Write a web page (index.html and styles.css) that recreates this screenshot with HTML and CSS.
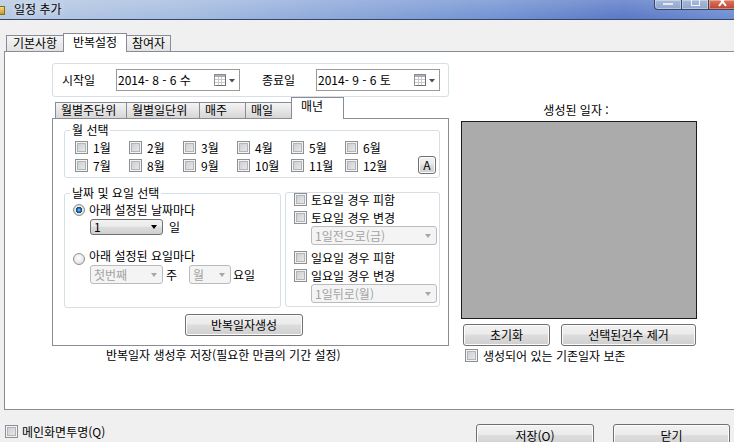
FILE: index.html
```html
<!DOCTYPE html>
<html lang="ko">
<head>
  <meta charset="UTF-8">
  <title>일정 추가</title>
  <link rel="stylesheet" href="styles.css">
</head>
<body>

  <!-- ──────────  TITLE BAR  ────────── -->
  <div class="titlebar">
    <span class="app-icon"></span>
    <span class="title">일정 추가</span>
    <div class="win-buttons">
      <span class="wb wb-min"><i class="g-min"></i></span>
      <span class="wb wb-max"><i class="g-max"></i></span>
      <span class="wb wb-close">
        <svg width="12" height="10" viewBox="0 0 12 10"><path d="M2 -3 L9 6 M9 -3 L2 6" stroke="#fff" stroke-width="2"/></svg>
      </span>
    </div>
  </div>

  <!-- ──────────  MAIN TABS  ────────── -->
  <div class="tabs">
    <span class="tab tab-basic">기본사항</span>
    <span class="tab active tab-repeat">반복설정</span>
    <span class="tab tab-people">참여자</span>
  </div>

  <div class="tab-panel">

    <!-- left side : period + rule tabs -->
    <div class="left-col">
      <div class="range-box">
        <span class="range-label">시작일</span>
        <div class="datepick">
          <span class="date-text">2014- 8 - 6 수</span>
          <svg class="cal-icon" width="21" height="12" viewBox="0 0 21 12">
            <rect x="0.5" y="0.5" width="11" height="11" fill="#fff" stroke="#8d8d8d"/>
            <rect x="1" y="1" width="10" height="2" fill="#a9b0ba"/>
            <path d="M1 5.5h10M1 8.5h10M4.5 3v8M7.5 3v8" stroke="#c9c9c9"/>
            <path d="M11.5 2v10M2 11.5h10" stroke="#6e6e6e"/>
            <path d="M15 5h6l-3 3.5z" fill="#3f4f6b"/>
          </svg>
        </div>
        <span class="range-label range-end">종료일</span>
        <div class="datepick">
          <span class="date-text">2014- 9 - 6 토</span>
          <svg class="cal-icon" width="21" height="12" viewBox="0 0 21 12">
            <rect x="0.5" y="0.5" width="11" height="11" fill="#fff" stroke="#8d8d8d"/>
            <rect x="1" y="1" width="10" height="2" fill="#a9b0ba"/>
            <path d="M1 5.5h10M1 8.5h10M4.5 3v8M7.5 3v8" stroke="#c9c9c9"/>
            <path d="M11.5 2v10M2 11.5h10" stroke="#6e6e6e"/>
            <path d="M15 5h6l-3 3.5z" fill="#3f4f6b"/>
          </svg>
        </div>
      </div>

      <div class="subtabs">
        <span class="subtab st-1">월별주단위</span>
        <span class="subtab st-2">월별일단위</span>
        <span class="subtab st-3">매주</span>
        <span class="subtab st-4">매일</span>
        <span class="subtab active st-5">매년</span>
      </div>

      <div class="sub-panel">
        <fieldset class="group months">
          <legend>월 선택</legend>
          <div class="month-row">
            <div class="month-grid">
              <label class="chk"><span class="cb"></span>1월</label>
              <label class="chk"><span class="cb"></span>2월</label>
              <label class="chk"><span class="cb"></span>3월</label>
              <label class="chk"><span class="cb"></span>4월</label>
              <label class="chk"><span class="cb"></span>5월</label>
              <label class="chk"><span class="cb"></span>6월</label>
              <label class="chk"><span class="cb"></span>7월</label>
              <label class="chk"><span class="cb"></span>8월</label>
              <label class="chk"><span class="cb"></span>9월</label>
              <label class="chk"><span class="cb"></span>10월</label>
              <label class="chk"><span class="cb"></span>11월</label>
              <label class="chk"><span class="cb"></span>12월</label>
            </div>
            <button class="btn btn-a">A</button>
          </div>
        </fieldset>

        <div class="option-row">
          <fieldset class="group day-group">
            <legend>날짜 및 요일 선택</legend>
            <div class="radio-line"><span class="rb on"></span>아래 설정된 날짜마다</div>
            <div class="combo-line line-day">
              <span class="combo combo-day">1<i class="arrow"></i></span>
              <span class="unit unit-day">일</span>
            </div>
            <div class="radio-line radio-week"><span class="rb"></span>아래 설정된 요일마다</div>
            <div class="combo-line line-week">
              <span class="combo disabled combo-nth">첫번째<i class="arrow"></i></span>
              <span class="unit unit-week">주</span>
              <span class="combo disabled combo-wd">월<i class="arrow"></i></span>
              <span class="unit unit-wd">요일</span>
            </div>
          </fieldset>

          <fieldset class="group weekend-group">
            <label class="chk chk-wk"><span class="cb"></span>토요일 경우 피함</label>
            <label class="chk chk-wk chk-change"><span class="cb"></span>토요일 경우 변경</label>
            <span class="combo disabled combo-shift">1일전으로(금)<i class="arrow"></i></span>
            <label class="chk chk-wk chk-sun"><span class="cb"></span>일요일 경우 피함</label>
            <label class="chk chk-wk chk-sun2"><span class="cb"></span>일요일 경우 변경</label>
            <span class="combo disabled combo-shift">1일뒤로(월)<i class="arrow"></i></span>
          </fieldset>
        </div>

        <button class="btn btn-gen">반복일자생성</button>
      </div>

      <p class="note">반복일자 생성후 저장(필요한 만큼의 기간 설정)</p>
    </div>

    <!-- right side : generated dates -->
    <div class="right-col">
      <div class="result-label">생성된 일자 :</div>
      <div class="result-list"></div>
      <div class="result-buttons">
        <button class="btn btn-reset">초기화</button>
        <button class="btn btn-remove">선택된건수 제거</button>
      </div>
      <label class="chk chk-keep"><span class="cb"></span>생성되어 있는 기존일자 보존</label>
    </div>
  </div>

  <!-- ──────────  FOOTER  ────────── -->
  <div class="footer">
    <label class="chk chk-main"><span class="cb"></span>메인화면투명(Q)</label>
    <button class="btn btn-save">저장(O)</button>
    <button class="btn btn-close">닫기</button>
  </div>

</body>
</html>
```

FILE: styles.css
```css
/* Page */
html, body {
  margin: 0;
  padding: 0;
}
body {
  width: 734px;
  height: 442px;
  overflow: hidden;
  background: #f0f0f0;
  font-family: "Noto Sans CJK KR", "Noto Sans", sans-serif;
  font-size: 12px;
  line-height: 14px;
  color: #000;
}

/* Title bar */
.titlebar {
  height: 19px;
  display: flex;
  align-items: flex-start;
  border-bottom: 1px solid #34466b;
  background:
    linear-gradient(to bottom, rgba(255,255,255,0.18), rgba(255,255,255,0)),
    linear-gradient(to right, #b7cae3 0%, #a5bce0 25%, #87a3d8 50%, #7192d2 68%, #5a78c6 85%, #6f8fd2 100%);
}
.app-icon {
  width: 4px;
  height: 7px;
  margin-top: 6px;
  background: linear-gradient(#f4dc7a, #c89a2c);
  border: 1px solid #8a6a22;
  border-left: none;
}
.title {
  margin-left: 9px;
  line-height: 17px;
  text-shadow: 0 0 6px rgba(255,255,255,0.9);
}
.win-buttons {
  margin-left: auto;
  margin-right: -3px;
  display: flex;
  height: 10px;
}
.wb {
  box-sizing: border-box;
  height: 10px;
  border: 1px solid #3a4866;
  border-top: none;
  display: flex;
  justify-content: center;
  background: linear-gradient(#a9bbd9, #8ea5cf);
  box-shadow: inset 0 0 0 1px rgba(255,255,255,0.35);
}
.wb-min {
  width: 28px;
  border-radius: 0 0 0 4px;
}
.wb-max {
  width: 27px;
  border-left: none;
}
.wb-close {
  width: 28px;
  border-left: none;
  background: linear-gradient(#dd7a62, #c2402a);
}
.g-min {
  width: 10px;
  height: 2px;
  margin-top: 3px;
  background: #e6e9ef;
}
.g-max {
  width: 7px;
  height: 5px;
  border: 1px solid #f2f4f8;
  border-top: none;
}

/* Main tabs */
.tabs {
  height: 31px;
  box-sizing: border-box;
  padding: 13px 0 0 6px;
  display: flex;
  align-items: flex-end;
}
.tab {
  box-sizing: border-box;
  height: 16px;
  border: 1px solid #898c95;
  border-bottom: none;
  background: linear-gradient(#f5f5f5, #e2e2e2);
  text-align: center;
  line-height: 14px;
}
.tab.active {
  height: 19px;
  margin-bottom: -1px;
  background: #fff;
  position: relative;
  z-index: 1;
  line-height: 16px;
}
.tab-basic { width: 58px; }
.tab-repeat { width: 64px; margin-left: -1px; }
.tab-people { width: 45px; margin-left: -1px; }

.tab-panel {
  box-sizing: border-box;
  width: 740px;
  height: 359px;
  margin-left: 4px;
  border: 1px solid #898c95;
  background: #fff;
  padding-left: 47px;
  display: flex;
}

/* Left column */
.left-col {
  width: 397px;
}
.range-box {
  box-sizing: border-box;
  height: 34px;
  margin-top: 11px;
  border: 1px solid #d5dfe5;
  border-radius: 3px;
  padding-left: 9px;
  display: flex;
  align-items: center;
}
.range-label {
  width: 36px;
}
.range-end {
  margin-left: 22px;
}
.datepick {
  box-sizing: border-box;
  width: 124px;
  height: 22px;
  margin-left: 18px;
  border: 1px solid #9a9a9a;
  padding: 0 4px 0 1px;
  display: flex;
  align-items: center;
  background: #fff;
}
.date-text {
  white-space: pre;
}
.cal-icon {
  margin-left: auto;
}

/* Rule tabs */
.subtabs {
  height: 21px;
  padding-left: 3px;
  display: flex;
  align-items: flex-end;
}
.subtab {
  box-sizing: border-box;
  height: 16px;
  border: 1px solid #898c95;
  border-bottom: none;
  padding-left: 5px;
  background: linear-gradient(#f4f4f4, #d6d6d6);
  line-height: 14px;
  margin-left: -1px;
}
.subtab.active {
  height: 22px;
  margin-bottom: -1px;
  background: #fff;
  padding-left: 9px;
  line-height: 15px;
  position: relative;
  z-index: 1;
}
.st-1 { width: 72px; margin-left: 0; }
.st-2 { width: 74px; }
.st-3 { width: 47px; }
.st-4 { width: 47px; }
.st-5 { width: 53px; }

.sub-panel {
  box-sizing: border-box;
  height: 228px;
  border: 1px solid #898c95;
  background: #fff;
}

/* Group boxes */
.group {
  margin: 0;
  padding: 0;
  border: 1px solid #d5dfe5;
  border-radius: 3px;
  min-width: 0;
  box-sizing: border-box;
}
.group legend {
  padding: 0 2px;
  line-height: 14px;
}

.months {
  margin: 4px 8px 0 11px;
  padding: 4px 3px 5px 10px;
}
.months legend {
  margin-left: -5px;
}
.month-row {
  display: flex;
}
.month-grid {
  display: grid;
  grid-template-columns: repeat(6, 54px);
  row-gap: 5px;
}

/* Checkbox / radio */
.chk {
  display: flex;
  align-items: center;
  gap: 5px;
  height: 13px;
  line-height: 13px;
  white-space: nowrap;
}
.cb {
  box-sizing: border-box;
  width: 13px;
  height: 13px;
  flex: none;
  border: 1px solid #8e8f8f;
  background: linear-gradient(135deg, #c6c9ce 0%, #eeeeee 100%);
  box-shadow: inset 0 0 0 1px #f4f4f4, inset 0 0 0 2px #b1b5ba;
}
.rb {
  box-sizing: border-box;
  width: 12px;
  height: 12px;
  flex: none;
  border: 1px solid #8e8f8f;
  border-radius: 50%;
  background: radial-gradient(circle at 45% 40%, #ffffff 0%, #d6d6d6 100%);
}
.rb.on {
  background: radial-gradient(circle closest-side at 50% 50%, #8fd0f7 0%, #2a7fc6 30%, #123f6e 58%, #f2f2f2 64%, #d6d6d6 100%);
}

.btn {
  box-sizing: border-box;
  height: 22px;
  padding: 0;
  border: 1px solid #707070;
  border-radius: 3px;
  background: linear-gradient(#f2f2f2 0%, #ebebeb 45%, #dddddd 50%, #cfcfcf 100%);
  box-shadow: inset 0 0 0 1px #fcfcfc;
  font: inherit;
  line-height: 14px;
  color: #000;
}
.btn-a {
  width: 18px;
  height: 18px;
  margin-left: auto;
  align-self: flex-end;
  margin-bottom: -2px;
}

/* Date / weekday options */
.option-row {
  display: flex;
  gap: 4px;
  margin: 8px 0 0 11px;
  align-items: flex-start;
}
.day-group {
  width: 217px;
  height: 122px;
  padding: 4px 0 0 8px;
}
.day-group legend {
  margin-left: -3px;
}
.radio-line {
  display: flex;
  align-items: center;
  gap: 4px;
  height: 12px;
  line-height: 12px;
}
.radio-week {
  margin-top: 15px;
  align-items: flex-start;
}
.radio-week .rb {
  margin-top: 3px;
}
.combo-line {
  display: flex;
  align-items: center;
  padding-left: 17px;
}
.line-day {
  margin-top: 3px;
}
.line-week {
  margin-top: 3px;
}
.combo {
  box-sizing: border-box;
  display: flex;
  align-items: center;
  height: 19px;
  padding-left: 3px;
  border: 1px solid #707070;
  border-radius: 3px;
  background: linear-gradient(#f2f2f2 0%, #ebebeb 45%, #dddddd 50%, #cfcfcf 100%);
  white-space: nowrap;
}
.combo.disabled {
  border-color: #b8bbbf;
  background: #f4f4f4;
  color: #a3a3a3;
}
.arrow {
  margin-left: auto;
  margin-right: 5px;
  width: 0;
  height: 0;
  border-left: 3.5px solid transparent;
  border-right: 3.5px solid transparent;
  border-top: 4px solid #000;
}
.combo.disabled .arrow {
  border-top-color: #a6a6a6;
}
.combo-day {
  width: 73px;
  height: 16px;
}
.unit-day { margin-left: 6px; }
.combo-nth { width: 73px; }
.unit-week { margin-left: 3px; }
.combo-wd { width: 42px; margin-left: 12px; }
.unit-wd { margin-left: 2px; }

.weekend-group {
  width: 155px;
  height: 115px;
  margin-top: 6px;
  padding: 0 0 0 8px;
}
.chk-wk {
  gap: 4px;
}
.chk-change { margin-top: 5px; }
.chk-sun { margin-top: 6px; }
.chk-sun2 { margin-top: 5px; }
.combo-shift {
  width: 126px;
  margin: 2px 0 0 17px;
}

.btn-gen {
  display: block;
  width: 118px;
  margin: 6px 0 0 132px;
}

.note {
  margin: 2px 0 0 54px;
}

/* Right column */
.right-col {
  width: 236px;
  margin-left: 12px;
}
.result-label {
  margin-top: 51px;
  text-align: center;
  padding-right: 6px;
}
.result-list {
  box-sizing: border-box;
  height: 198px;
  margin-top: 4px;
  border: 1px solid #1c1c1c;
  background: #ababab;
}
.result-buttons {
  display: flex;
  margin-top: 5px;
}
.btn-reset {
  width: 87px;
  margin-left: 2px;
}
.btn-remove {
  width: 135px;
  margin-left: 11px;
}
.chk-keep {
  margin: 3px 0 0 4px;
}

/* Footer */
.footer {
  display: flex;
  align-items: flex-start;
  padding: 14px 4px 0 5px;
}
.chk-main {
  margin-top: 1px;
  gap: 4px;
}
.btn-save {
  width: 118px;
  height: 23px;
  margin-left: auto;
}
.btn-close {
  width: 117px;
  height: 23px;
  margin-left: 19px;
}
```
